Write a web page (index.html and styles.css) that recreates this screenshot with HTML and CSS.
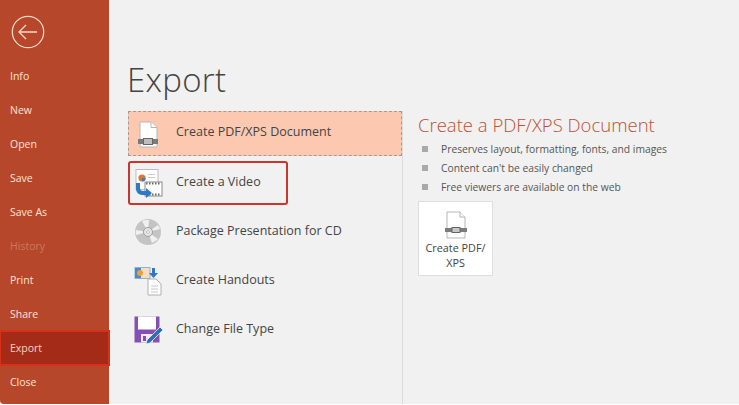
FILE: index.html
```html
<!DOCTYPE html>
<html lang="en">
<head>
<meta charset="utf-8">
<title>Export</title>
<link rel="stylesheet" href="styles.css">
</head>
<body>
<div class="app">
  <nav class="side">
    <div class="back">
      <svg width="34" height="34" viewBox="0 0 34 34" fill="none" stroke="#f9d9c8" stroke-width="1.3"><circle cx="17" cy="17" r="15.7"/><path d="M8 17h18M15 10l-7 7 7 7"/></svg>
    </div>
    <ul class="menu">
      <li>Info</li>
      <li>New</li>
      <li>Open</li>
      <li>Save</li>
      <li>Save As</li>
      <li class="off">History</li>
      <li>Print</li>
      <li>Share</li>
      <li class="cur">Export</li>
      <li>Close</li>
    </ul>
  </nav>
  <main class="main">
    <h1 class="title">Export</h1>
    <div class="cols">
      <div class="opts">
        <div class="opt sel">
          <svg class="ico" width="30" height="30" viewBox="0 0 30 30"><path d="M7 3h11l6 5.500V28H7z" fill="#fff" stroke="#b5b5b5"/><path d="M18 3v5.500h6" fill="#fff" stroke="#b5b5b5"/><rect x="5" y="20" width="20" height="5" fill="#7b7b7b"/><rect x="10.500" y="19.500" width="9" height="6" fill="#bdbdbd" stroke="#666"/></svg>
          <span>Create PDF/XPS Document</span>
        </div>
        <div class="opt mark">
          <svg class="ico" width="30" height="30" viewBox="0 0 30 30"><rect x="3" y="1.500" width="22" height="20" fill="#fff" stroke="#bdbdbd"/><circle cx="9" cy="10" r="3.600" fill="#e0752e"/><path d="M9 10h3.600a3.600 3.600 0 0 1-3.600 3.600z" fill="#3a7fc4"/><rect x="15" y="6" width="7" height="1" fill="#ccc"/><rect x="15" y="9" width="7" height="1" fill="#ccc"/><rect x="12" y="14" width="17" height="14" fill="#fff" stroke="#8a8a8a"/><path d="M13 15.500h15M13 26.500h15" stroke="#666" stroke-width="2" stroke-dasharray="1.500 1.500"/><path d="M7 15v5a3 3 0 0 0 3 3h3v-3l6 5-6 5v-3h-4a6 6 0 0 1-6-6v-6z" fill="#2f78c2"/></svg>
          <span>Create a Video</span>
        </div>
        <div class="opt">
          <svg class="ico" width="30" height="30" viewBox="0 0 30 30"><circle cx="15" cy="15" r="13" fill="#c4c4c4"/><path d="M15 15L9 4a13 13 0 0 1 7-1zM15 15l10 7a13 13 0 0 1-6 4zM15 15L3 13a13 13 0 0 0 0 5zM15 15l12-3a13 13 0 0 0-2-4z" fill="#f0f0f0"/><circle cx="15" cy="15" r="4.500" fill="#e6e6e6" stroke="#9c9c9c"/><circle cx="15" cy="15" r="1.500" fill="#f4f4f4" stroke="#aaa" stroke-width=".6"/></svg>
          <span>Package Presentation for CD</span>
        </div>
        <div class="opt">
          <svg class="ico" width="30" height="30" viewBox="0 0 30 30"><rect x="2" y="1.500" width="15" height="11" fill="#f6dcc0" stroke="#8fb0d8"/><path d="M2 2h6v10H2z" fill="#4f86c6"/><circle cx="7" cy="7" r="3" fill="#e9a23b"/><path d="M19 2h3v5h3l-4.500 5L16 7h3z" fill="#2f78c2"/><path d="M15 13h8l5 5v11H15z" fill="#fff" stroke="#b0b0b0"/><path d="M18 20h7M18 23h7M18 26h7" stroke="#c6c6c6"/></svg>
          <span>Create Handouts</span>
        </div>
        <div class="opt">
          <svg class="ico" width="30" height="30" viewBox="0 0 30 30"><path d="M1.500 1.500h25v26h-25z" fill="#8450b4"/><rect x="5" y="1.500" width="18" height="13" fill="#fff"/><rect x="8" y="19" width="12" height="8.500" fill="#f3eaf7"/><rect x="10" y="21" width="3" height="5" fill="#8450b4"/><path d="M14 25l13-13 3 3-13 13-4 1z" fill="#2f6fb4" stroke="#f1f1f1" stroke-width=".8"/></svg>
          <span>Change File Type</span>
        </div>
      </div>
      <section class="detail">
        <h2 class="head">Create a PDF/XPS Document</h2>
        <ul class="points">
          <li>Preserves layout, formatting, fonts, and images</li>
          <li>Content can't be easily changed</li>
          <li>Free viewers are available on the web</li>
        </ul>
        <div class="btn">
          <svg width="24" height="28" viewBox="0 0 24 28"><path d="M3 1h13l5 5v21H3z" fill="#fff" stroke="#b5b5b5"/><path d="M16 1v5h5" fill="#fff" stroke="#b5b5b5"/><rect x="1" y="17" width="22" height="4" fill="#7b7b7b"/><rect x="8" y="16.500" width="8" height="5" fill="#c6c6c6" stroke="#666"/></svg>
          <span>Create PDF/<br>XPS</span>
        </div>
      </section>
    </div>
  </main>
</div>
</body>
</html>
```
FILE: styles.css
```css
* { box-sizing: border-box; }
html, body { margin: 0; height: 100%; overflow: hidden; background: #fff; }
body { font-family: "Open Sans", "Noto Sans", sans-serif; }
ul { list-style: none; margin: 0; padding: 0; }
h1, h2 { margin: 0; font-weight: 400; }

.app { display: flex; width: 739px; height: 404px; background: #f1f1f1; }

.side { width: 109px; flex: none; background: #b7472a; color: #fbe3d6; border-bottom-left-radius: 4px; padding-top: 15px; }
.back { height: 34px; padding-left: 11px; margin-bottom: 10px; }
.menu li { height: 34px; line-height: 34px; padding-left: 10px; font-size: 10.500px; }
.menu .off { color: #c9795f; }
.menu .cur { position: relative; background: #a42b18; box-shadow: 0 0 0 1px #d8301a, inset 0 0 0 1px #d8301a; color: #f8d3c2; }

.main { flex: 1; padding: 56px 0 0 19px; display: flex; flex-direction: column; }
.title { font-size: 33px; font-weight: 300; line-height: 48px; height: 55px; margin-left: -1px; color: #444; letter-spacing: .3px; }

.cols { display: flex; flex: 1; }
.opts { width: 275px; flex: none; border-right: 1px solid #dcdcdc; display: flex; flex-direction: column; gap: 5px; }
.opt { height: 44px; display: flex; align-items: center; gap: 13px; padding-left: 5px; font-size: 12.500px; color: #444; }
.opt span { margin-top: -4px; }
.opt.sel { width: 274px; height: 45px; background: #fcc9b0; border: 1px dashed #a89a92; padding-left: 4px; }
.opt.mark { width: 160px; border: 2px solid #c9362a; border-radius: 3px; padding-left: 3px; }
.opt .ico { flex: none; }

.detail { padding: 1px 0 0 15px; }
.head { font-size: 18.500px; font-weight: 300; line-height: 26px; color: #c04f33; white-space: nowrap; }
.points { margin-top: 1px; }
.points li { display: flex; align-items: center; gap: 13px; height: 19px; padding-left: 4px; font-size: 10.300px; color: #555; white-space: nowrap; }
.points li::before { content: ""; width: 6px; height: 6px; background: #a9a9a9; flex: none; }
.btn { width: 75px; height: 75px; margin-top: 5px; background: #fff; border: 1px solid #dedede; display: flex; flex-direction: column; align-items: center; padding-top: 9px; font-size: 10.800px; line-height: 15px; color: #444; text-align: center; }
.btn svg { margin-bottom: 1px; }
```
